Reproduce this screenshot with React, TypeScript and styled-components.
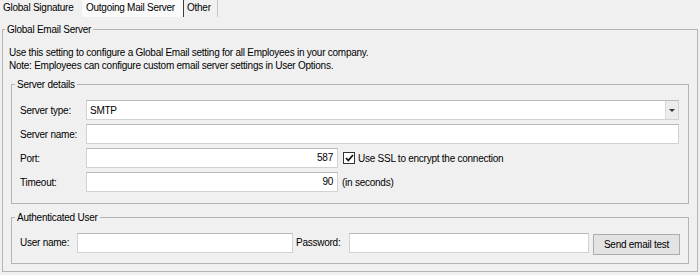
import React from "react";
import styled, { createGlobalStyle } from "styled-components";

const GlobalStyle = createGlobalStyle`
  html, body { margin: 0; padding: 0; background: #f0f0f0; }
  body {
    font-family: "Liberation Sans", Arial, sans-serif;
    font-size: 10px;
    letter-spacing: -0.25px;
    color: #000;
  }
  * { box-sizing: border-box; }
`;

const Page = styled.div`
  width: 700px;
  height: 275px;
  background: #f0f0f0;
  overflow: hidden;
`;

const TabBar = styled.div`
  display: flex;
  height: 18px;
`;

const Tab = styled.div<{ $active?: boolean; $width: number; $line?: "dark" | "light" }>`
  width: ${(p) => p.$width}px;
  height: 17px;
  line-height: 16px;
  padding-left: ${(p) => (p.$active ? 4 : 3)}px;
  background: ${(p) => (p.$active ? "#fafafa" : "transparent")};
  border-right: 1px solid
    ${(p) => (p.$line === "dark" ? "#3c3c3c" : p.$line === "light" ? "#c8c8c8" : "transparent")};
  white-space: nowrap;
`;

const GroupBox = styled.fieldset<{ $m: string; $p: string }>`
  margin: ${(p) => p.$m};
  padding: ${(p) => p.$p};
  border: 1px solid #b4b4b4;
  min-width: 0;
`;

const Legend = styled.legend<{ $shift: number }>`
  padding: 0 2px;
  margin-left: ${(p) => p.$shift}px;
  line-height: 13px;
  height: 13px;
`;

const Description = styled.div`
  line-height: 13px;
`;

const FormGrid = styled.div`
  display: grid;
  grid-template-columns: 66px 1fr;
  row-gap: 4px;
  align-items: center;
`;

const Label = styled.span`
  white-space: nowrap;
`;

const Field = styled.div<{ $w?: number; $align?: "left" | "right" }>`
  height: 20px;
  width: ${(p) => (p.$w ? `${p.$w}px` : "100%")};
  flex: none;
  background: #fff;
  border: 1px solid #d2d2d2;
  border-top-color: #b9b9b9;
  line-height: 18px;
  padding: 0 4px 0 3px;
  text-align: ${(p) => p.$align ?? "left"};
`;

const Select = styled.div`
  height: 20px;
  display: flex;
  align-items: center;
  justify-content: space-between;
  background: #fff;
  border: 1px solid #d2d2d2;
  border-top-color: #b9b9b9;
  padding: 0 0 0 3px;
`;

const DropButton = styled.span`
  width: 13px;
  height: 18px;
  background: #ececec;
  border-left: 1px solid #dadada;
  display: flex;
  align-items: center;
  justify-content: center;
`;

const Arrow = styled.span`
  width: 0;
  height: 0;
  border-left: 3px solid transparent;
  border-right: 3px solid transparent;
  border-top: 3px solid #333;
  margin-top: 1px;
`;

const InlineRow = styled.div`
  display: flex;
  align-items: center;
`;

const CheckBox = styled.span`
  width: 12px;
  height: 12px;
  margin: 0 3px 0 5px;
  background: #fff;
  border: 1px solid #333;
  display: flex;
  align-items: center;
  justify-content: center;
`;

const Hint = styled.span`
  margin-left: 4px;
  white-space: nowrap;
`;

const AuthRow = styled.div`
  display: flex;
  align-items: flex-start;
  height: 21px;
`;

const AuthLabel = styled.span<{ $w: number; $ml?: number }>`
  width: ${(p) => p.$w}px;
  margin-left: ${(p) => p.$ml ?? 0}px;
  line-height: 20px;
  flex: none;
  white-space: nowrap;
`;

const Button = styled.button`
  margin-left: 4px;
  margin-top: 1px;
  width: 87px;
  height: 21px;
  flex: none;
  background: #e3e3e3;
  border: 1px solid #adadad;
  font: inherit;
  letter-spacing: inherit;
  color: #000;
  padding: 0;
`;

export default function App() {
  return (
    <Page>
      <GlobalStyle />
      <TabBar>
        <Tab $width={82}>Global Signature</Tab>
        <Tab $width={102} $active $line="dark">
          Outgoing Mail Server
        </Tab>
        <Tab $width={34} $line="light">
          Other
        </Tab>
      </TabBar>
      <GroupBox $m="5px 2px 0 2px" $p="10px 8px 7px 6px">
        <Legend $shift={-4}>Global Email Server</Legend>
        <Description>
          Use this setting to configure a Global Email setting for all Employees in your company.
          <br />
          Note: Employees can configure custom email server settings in User Options.
        </Description>
        <GroupBox $m="6px 0 0 2px" $p="9px 9px 11px 8px">
          <Legend $shift={-5}>Server details</Legend>
          <FormGrid>
            <Label>Server type:</Label>
            <Select>
              <span>SMTP</span>
              <DropButton>
                <Arrow />
              </DropButton>
            </Select>
            <Label>Server name:</Label>
            <Field />
            <Label>Port:</Label>
            <InlineRow>
              <Field $w={252} $align="right">
                587
              </Field>
              <CheckBox>
                <svg width="9" height="8" viewBox="0 0 9 8">
                  <path d="M1 4 L3.3 6.5 L8 1" fill="none" stroke="#111" strokeWidth="1.8" />
                </svg>
              </CheckBox>
              <Label>Use SSL to encrypt the connection</Label>
            </InlineRow>
            <Label>Timeout:</Label>
            <InlineRow>
              <Field $w={252} $align="right">
                90
              </Field>
              <Hint>(in seconds)</Hint>
            </InlineRow>
          </FormGrid>
        </GroupBox>
        <GroupBox $m="7px 0 0 2px" $p="9px 9px 9px 8px">
          <Legend $shift={-5}>Authenticated User</Legend>
          <AuthRow>
            <AuthLabel $w={57}>User name:</AuthLabel>
            <Field $w={216} />
            <AuthLabel $w={53} $ml={3}>
              Password:
            </AuthLabel>
            <Field $w={240} />
            <Button>Send email test</Button>
          </AuthRow>
        </GroupBox>
      </GroupBox>
    </Page>
  );
}
